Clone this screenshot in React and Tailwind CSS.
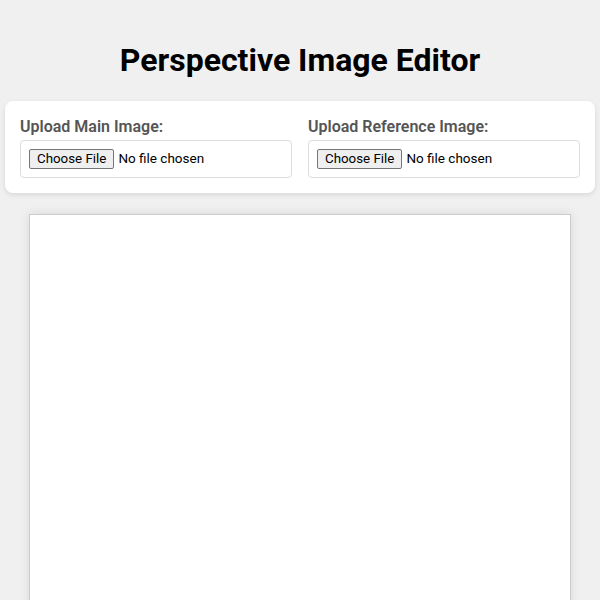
export default function App() {
  return (
    <div className="min-h-screen bg-[#f0f0f0] px-[5px] font-['Roboto',sans-serif]">
      <h1 className="pt-[40px] pb-[21px] text-center text-[32px] leading-[40px] font-bold text-black">
        Perspective Image Editor
      </h1>

      <div className="rounded-lg bg-white p-[15px] shadow-[0_2px_5px_rgba(0,0,0,0.1)]">
        <div className="grid grid-cols-2 gap-4">
          <div className="flex flex-col">
            <label className="mb-[2px] text-[16px] leading-[22px] font-semibold text-[#555]">
              Upload Main Image:
            </label>
            <input
              type="file"
              className="w-full rounded border border-[#ddd] p-[8px] text-[13.5px] leading-[18px] text-black file:mr-[4px] file:rounded-[2px] file:border file:border-[#767676] file:bg-[#efefef] file:px-[7px] file:py-0 file:text-[13.33px] file:text-black"
            />
          </div>
          <div className="flex flex-col">
            <label className="mb-[2px] text-[16px] leading-[22px] font-semibold text-[#555]">
              Upload Reference Image:
            </label>
            <input
              type="file"
              className="w-full rounded border border-[#ddd] p-[8px] text-[13.5px] leading-[18px] text-black file:mr-[4px] file:rounded-[2px] file:border file:border-[#767676] file:bg-[#efefef] file:px-[7px] file:py-0 file:text-[13.33px] file:text-black"
            />
          </div>
        </div>
      </div>

      <div className="mt-[21px] flex justify-center">
        <div className="h-[500px] w-[542px] border border-[#ccc] bg-white shadow-[0_0_10px_rgba(0,0,0,0.1)]" />
      </div>
    </div>
  );
}
